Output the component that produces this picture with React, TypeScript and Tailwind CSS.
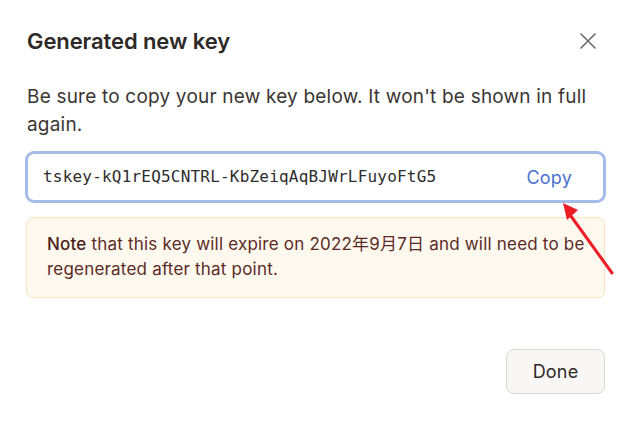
import React from "react";

export default function App() {
  return (
    <div className="relative w-[631px] h-[421px] bg-white overflow-hidden" style={{ fontFamily: "Inter, 'Noto Sans CJK SC', sans-serif" }}>
      <div className="flex flex-col px-[25px] pt-[26px]">
        <div className="flex items-center justify-between pl-[2px] pr-[9px]">
          <h2 className="text-[22px] leading-[30px] font-semibold text-[#2d2926] tracking-[-0.1px]">Generated new key</h2>
          <svg width="18" height="18" viewBox="0 0 18 18" className="text-[#6b6b6b]">
            <path d="M2 2 L16 16 M16 2 L2 16" stroke="currentColor" strokeWidth="1.6" strokeLinecap="round" />
          </svg>
        </div>
        <p className="mt-[27px] pl-[2px] text-[19px] leading-[28px] tracking-[0.2px] text-[#3a3633]">
          Be sure to copy your new key below. It won't be shown in full again.
        </p>
        <div className="mt-[12px] h-[52px] flex items-center justify-between border-[3px] border-[#a7bbe9] rounded-[9px] pl-[15px] pr-[31px]">
          <span className="text-[16px] tracking-[0.2px] text-[#2d2d2d]" style={{ fontFamily: "'DejaVu Sans Mono', monospace" }}>
            tskey-kQ1rEQ5CNTRL-KbZeiqAqBJWrLFuyoFtG5
          </span>
          <span className="text-[18px] tracking-[0.2px] text-[#4a72cf]">Copy</span>
        </div>
        <div className="mt-[14px] mx-[1px] rounded-[7px] border border-[#f8e4c1] bg-[#fef9ee] pl-[20px] pr-[16px] pt-[14px] pb-[15px] text-[17px] leading-[25px] tracking-[0.2px] text-[#5b2a27]">
          <span className="font-medium text-[#4a1f1c]">Note</span> that this key will expire on 2022年9月7日 and will need to be regenerated after that point.
        </div>
        <div className="mt-[51px] flex justify-end pr-[1px]">
          <button className="w-[99px] h-[45px] rounded-[8px] border border-[#dad6d3] bg-[#f8f7f6] text-[18px] tracking-[0.2px] text-[#2d2a28]">Done</button>
        </div>
      </div>
      <svg className="absolute left-0 top-0" width="631" height="421" viewBox="0 0 631 421">
        <path d="M612 273 L568 212" stroke="#ee1c24" strokeWidth="3" strokeLinecap="round" />
        <path d="M563 203 L578 210 L567 220 Z" fill="#ee1c24" />
      </svg>
    </div>
  );
}
